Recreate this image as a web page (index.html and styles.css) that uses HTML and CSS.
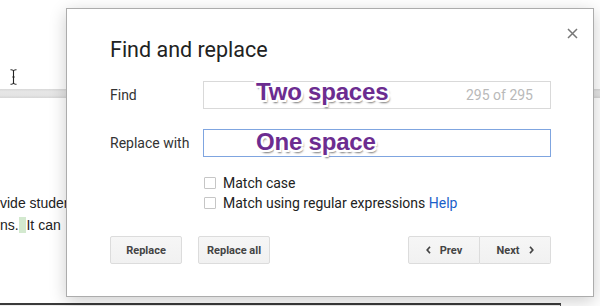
FILE: index.html
```html
<!DOCTYPE html>
<html lang="en">
<head>
    <meta charset="UTF-8">
    <meta name="viewport" content="width=device-width, initial-scale=1.0">
    <title>Find and replace</title>
    <link rel="stylesheet" href="styles.css">
</head>
<body>
    <div class="doc">
        <div class="toolbar">
            <svg class="ibeam" width="7" height="16" viewBox="0 0 7 16">
                <path d="M0.5 0.8 Q3.5 0.6 3.5 2.5 Q3.5 0.6 6.5 0.8 M3.5 2.5 V13.5 M0.5 15.2 Q3.5 15.4 3.5 13.5 Q3.5 15.4 6.5 15.2 M2.3 8 H4.7" fill="none" stroke="#222" stroke-width="1.1"/>
            </svg>
        </div>
        <div class="ruler"></div>
        <div class="page">
            <p class="line">vide students with</p>
            <p class="line">ns.<span class="hl">  </span>It can</p>
        </div>
        <div class="footer-box"></div>
    </div>

    <div class="dialog">
        <button class="close" aria-label="Close">
            <svg width="11" height="11" viewBox="0 0 11 11">
                <path d="M1 1 L10 10 M10 1 L1 10" stroke="#777" stroke-width="1.5"/>
            </svg>
        </button>

        <h1 class="title">Find and replace</h1>

        <div class="field-row">
            <div class="field-label">Find</div>
            <div class="input">
                <span class="count">295 of 295</span>
                <span class="callout callout-find">Two spaces</span>
            </div>
        </div>

        <div class="field-row field-row-second">
            <div class="field-label">Replace with</div>
            <div class="input input-focus">
                <span class="callout callout-replace">One space</span>
            </div>
        </div>

        <div class="checks">
            <div class="check-row">
                <span class="checkbox"></span>
                <span>Match case</span>
            </div>
            <div class="check-row">
                <span class="checkbox"></span>
                <span>Match using regular expressions <a class="help" href="#">Help</a></span>
            </div>
        </div>

        <div class="actions">
            <div class="action-group">
                <button class="btn">Replace</button>
                <button class="btn">Replace all</button>
            </div>
            <div class="nav-group">
                <button class="btn btn-prev">
                    <svg width="5" height="8" viewBox="0 0 5 8"><path d="M4 0.8 L1.2 4 L4 7.2" fill="none" stroke="#444" stroke-width="1.7"/></svg>
                    Prev
                </button>
                <button class="btn btn-next">
                    Next
                    <svg width="5" height="8" viewBox="0 0 5 8"><path d="M1 0.8 L3.8 4 L1 7.2" fill="none" stroke="#444" stroke-width="1.7"/></svg>
                </button>
            </div>
        </div>
    </div>
</body>
</html>
```

FILE: styles.css
```css
* {
    margin: 0;
    padding: 0;
    box-sizing: border-box;
}

body {
    width: 600px;
    height: 306px;
    overflow: hidden;
    position: relative;
    background: #fff;
    font-family: Roboto, "Liberation Sans", Arial, sans-serif;
}

/* document behind the dialog */
.doc {
    width: 600px;
}

.toolbar {
    height: 89px;
    padding: 69px 0 0 10px;
}

.ibeam {
    display: block;
}

.ruler {
    height: 9px;
    background: linear-gradient(#d8d8d8, #e6e6e6 30%, #e4e4e4 70%, #d6d6d6);
}

.page {
    height: 205px;
    padding-top: 94px;
    font-family: "Liberation Sans", Arial, sans-serif;
    font-size: 14px;
    line-height: 22px;
    color: #222;
}

.line {
    white-space: nowrap;
}

.hl {
    white-space: pre;
    background: #d3e9cf;
}

.footer-box {
    width: 561px;
    height: 3px;
    background: #efefef;
    border-top: 2px solid #3b3b3b;
    border-right: 1px solid #555;
}

/* dialog */
.dialog {
    position: absolute;
    left: 66px;
    top: 8px;
    width: 528px;
    height: 289px;
    padding: 29px 42px 0 43px;
    background: #fff;
    border: 1px solid #acacac;
    box-shadow: 0 4px 16px rgba(0, 0, 0, 0.2);
}

.close {
    position: absolute;
    top: 19px;
    right: 15px;
    width: 11px;
    height: 11px;
    border: none;
    background: none;
    display: flex;
}

.title {
    font-size: 21.5px;
    font-weight: 400;
    line-height: 24px;
    color: #222;
}

.field-row {
    display: flex;
    align-items: center;
    margin-top: 19px;
}

.field-row-second {
    margin-top: 20px;
}

.field-label {
    width: 93px;
    font-size: 14px;
    color: #333;
}

.input {
    position: relative;
    flex: 1;
    height: 28px;
    border: 1px solid #d9d9d9;
    display: flex;
    align-items: center;
    justify-content: flex-end;
    padding-right: 17px;
}

.input-focus {
    border-color: #7fa5e0;
}

.count {
    font-size: 14px;
    color: #b9b9b9;
}

.callout {
    position: absolute;
    left: 52px;
    font-family: "Liberation Sans", Arial, sans-serif;
    font-weight: 700;
    font-size: 24px;
    line-height: 23px;
    color: #6c2c90;
    letter-spacing: -0.2px;
    text-shadow:
        -2px -2px 0 #fff, 2px -2px 0 #fff, -2px 2px 0 #fff, 2px 2px 0 #fff,
        0 -2px 0 #fff, 0 2px 0 #fff, -2px 0 0 #fff, 2px 0 0 #fff,
        2px 3px 2px rgba(0, 0, 0, 0.55);
}

.callout-find {
    top: -2px;
}

.callout-replace {
    top: 0;
}

.checks {
    margin-top: 16px;
    padding-left: 94px;
}

.check-row {
    display: flex;
    align-items: center;
    gap: 7px;
    height: 20px;
    font-size: 14px;
    color: #222;
}

.checkbox {
    width: 12px;
    height: 12px;
    border: 1px solid #c6c6c6;
    border-radius: 1px;
    background: #fff;
}

.help {
    color: #1a5fc9;
    text-decoration: none;
}

.actions {
    margin-top: 23px;
    display: flex;
    justify-content: space-between;
}

.action-group {
    display: flex;
    gap: 16px;
}

.nav-group {
    display: flex;
}

.btn {
    width: 72px;
    height: 28px;
    border: 1px solid #dcdcdc;
    border-radius: 2px;
    background: linear-gradient(#f6f6f6, #f1f1f1);
    font-family: Roboto, "Liberation Sans", Arial, sans-serif;
    font-size: 11px;
    font-weight: 700;
    color: #444;
    display: flex;
    align-items: center;
    justify-content: center;
    gap: 9px;
}

.btn-prev {
    border-radius: 2px 0 0 2px;
}

.btn-next {
    width: 71px;
    border-left: none;
    border-radius: 0 2px 2px 0;
}
```
